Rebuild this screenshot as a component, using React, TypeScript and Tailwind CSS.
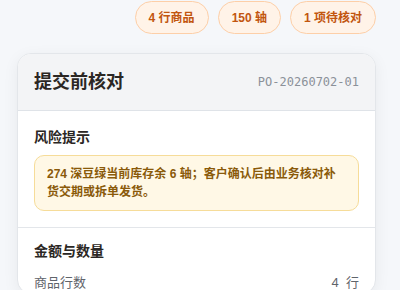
import React from "react";

const pills = ["4 行商品", "150 轴", "1 项待核对"];

const App = () => {
  return (
    <div
      className="w-[400px] h-[290px] overflow-hidden bg-[#f5f7fa]"
      style={{ fontFamily: '"Liberation Sans", "Noto Sans CJK SC", sans-serif' }}
    >
      {/* Summary pills */}
      <div className="flex justify-end gap-[9px] pt-px pr-[24px]">
        {pills.map((p) => (
          <span
            key={p}
            className="h-[33px] px-[13px] flex items-center rounded-full border border-[#fdcfa8] bg-[#fff3e8] text-[12px] font-bold text-[#c2560f]"
          >
            {p}
          </span>
        ))}
      </div>

      {/* Card */}
      <div className="mt-[19px] ml-[17px] w-[359px] rounded-[14px] border border-[#e3e6ea] bg-white shadow-[0_4px_16px_rgba(15,23,42,0.06)] overflow-hidden">
        <div className="h-[57px] px-4 flex items-center justify-between bg-[#f3f4f6] border-b border-[#dfe3e8]">
          <h2 className="text-[18px] font-bold text-[#2b2724]">提交前核对</h2>
          <span
            className="text-[12px] text-[#8b9199]"
            style={{ fontFamily: '"DejaVu Sans Mono", monospace' }}
          >
            PO-20260702-01
          </span>
        </div>

        <div className="px-4 pt-4 pb-4 border-b border-[#e3e6ea]">
          <h3 className="text-[14px] leading-5 font-semibold text-[#2b2724]">风险提示</h3>
          <div className="mt-2 rounded-[10px] border border-[#f6dc99] bg-[#fff8e6] px-3 py-[9px] text-[12px] leading-[18px] font-bold text-[#8a5a0a]">
            274 深豆绿当前库存余 6 轴；客户确认后由业务核对补货交期或拆单发货。
          </div>
        </div>

        <div className="px-4 pt-[13px]">
          <h3 className="text-[14px] leading-5 font-semibold text-[#2b2724]">金额与数量</h3>
          <div className="mt-[12px] flex justify-between text-[13px] leading-5 text-[#5f646b]">
            <span>商品行数</span>
            <span>4&nbsp; 行</span>
          </div>
        </div>
      </div>
    </div>
  );
};

export default App;
